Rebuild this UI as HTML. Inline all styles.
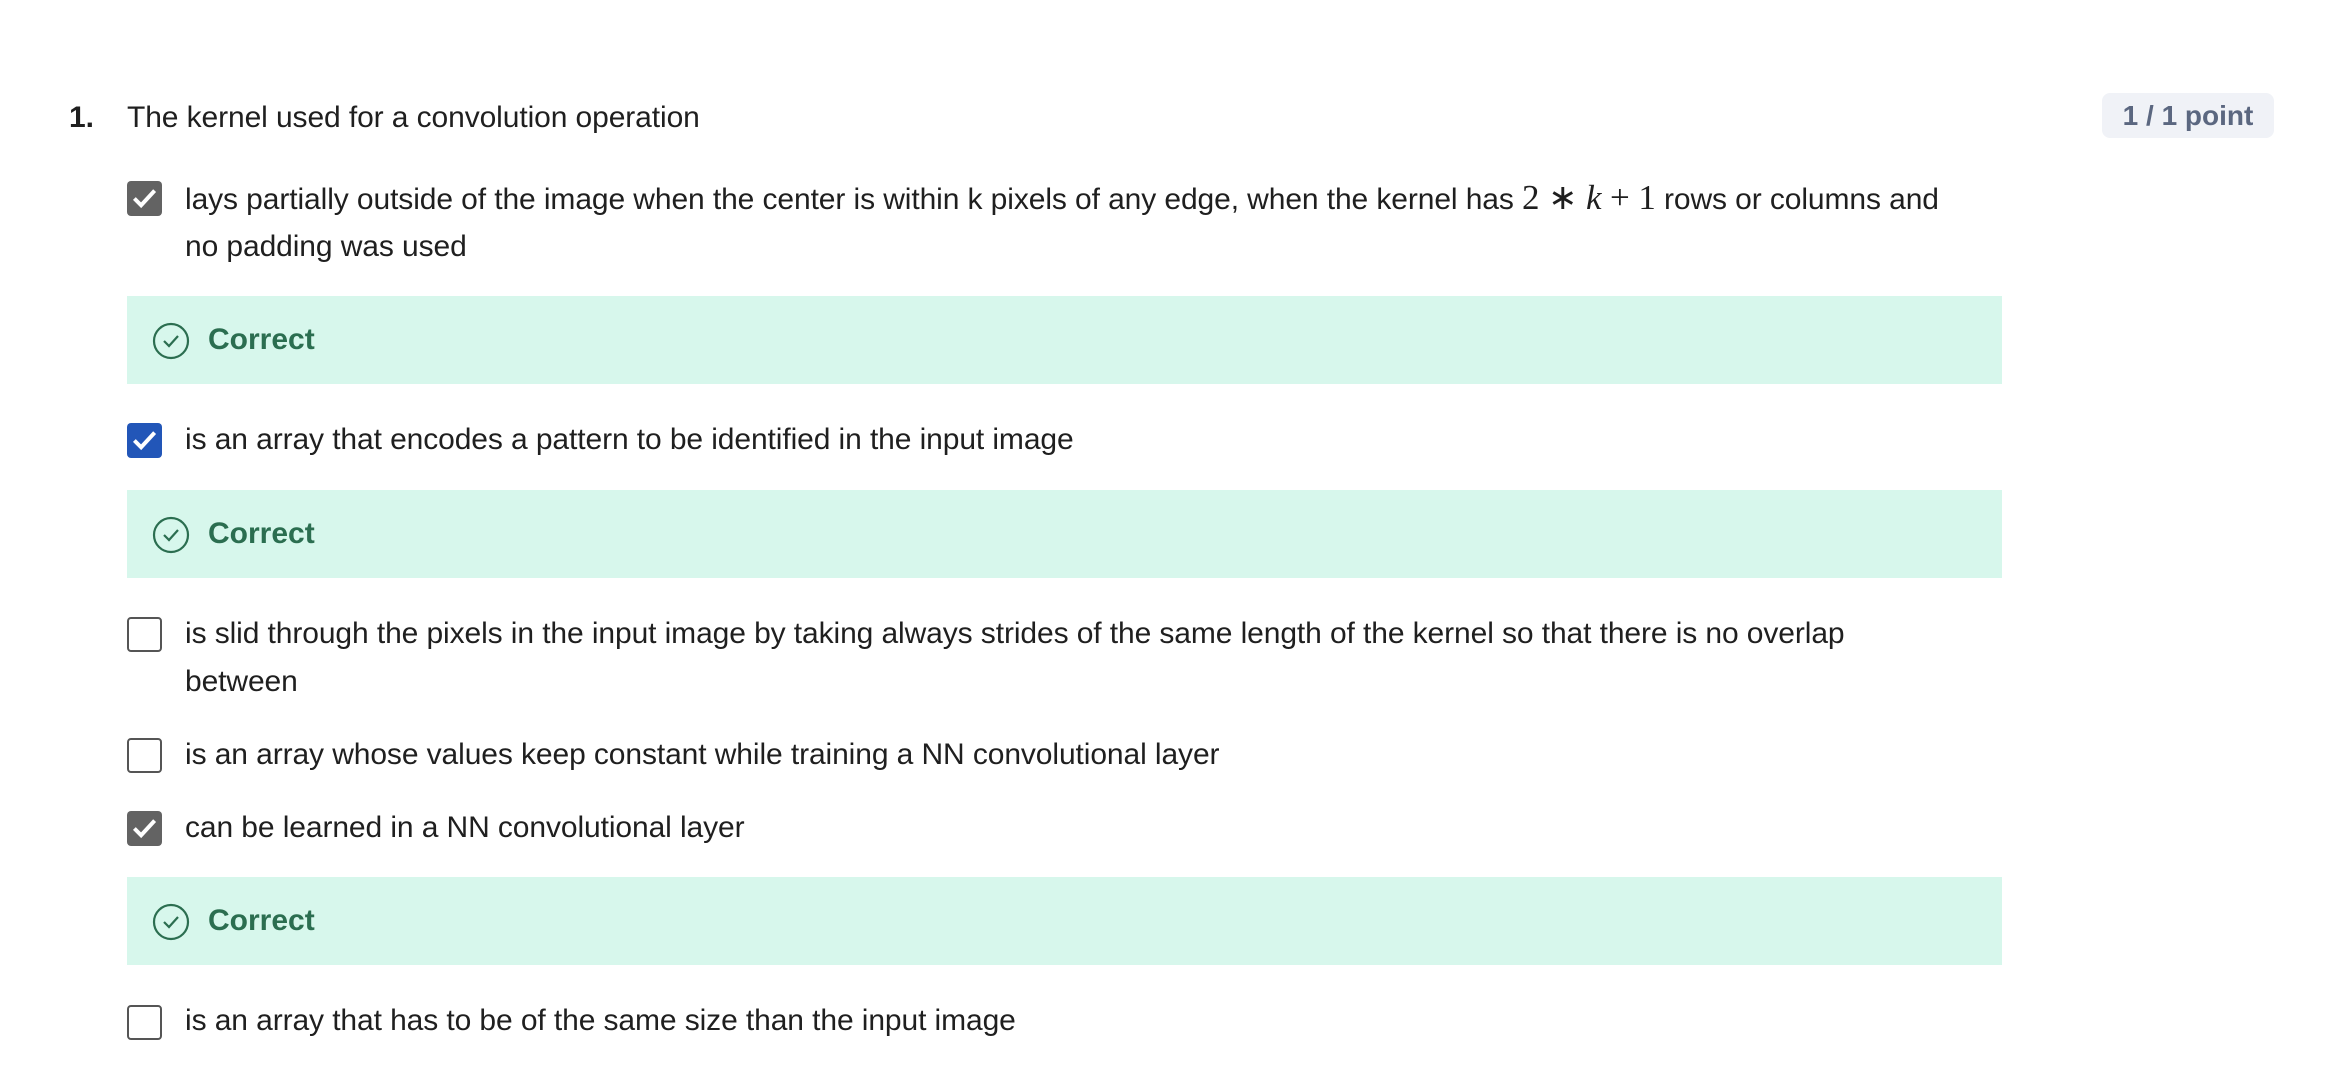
<!DOCTYPE html>
<html><head><meta charset="utf-8"><style>
html,body{margin:0;padding:0;background:#fff;width:2330px;height:1074px;overflow:hidden}
body{font-family:"Liberation Sans",sans-serif;color:#1f1f1f;position:relative}
.a{position:absolute;white-space:nowrap;font-size:30px;letter-spacing:-0.1px}
.cb{position:absolute;left:127px;width:35px;height:35px;border-radius:4px;box-sizing:border-box}
.gray{background:#636363}
.blue{background:#2256b8}
.empty{border:2.5px solid #555;background:#fff}
.cb svg{position:absolute;left:4px;top:5px}
.ok{position:absolute;left:127px;width:1875px;height:88px;background:#d7f7ec}
.ok svg{position:absolute;left:25px;top:26px}
.ok span{position:absolute;left:81px;top:0;line-height:88px;font-size:30px;font-weight:bold;color:#2b6e50}
</style></head><body>
<div class="a" style="left:69px;top:101px;font-weight:bold">1.</div>
<div class="a" style="left:127px;top:101px">The kernel used for a convolution operation</div>
<div style="position:absolute;left:2102px;top:93px;width:172px;height:45px;background:#f0f2f7;border-radius:8px;text-align:center;line-height:45px;font-size:28px;font-weight:bold;color:#5b6780">1 / 1 point</div>

<div class="cb gray" style="top:181px"><svg width="27" height="25" viewBox="0 0 24 22"><path d="M3 11 L9 17 L21 4" fill="none" stroke="#fff" stroke-width="3.5"/></svg></div>
<div class="a" style="left:185px;top:178px">lays partially outside of the image when the center is within k pixels of any edge, when the kernel has <span style="font-family:'Liberation Serif',serif;font-size:35px">2 ∗ <i>k</i> + 1</span> rows or columns and</div>
<div class="a" style="left:185px;top:230px">no padding was used</div>
<div class="ok" style="top:296px"><svg width="38" height="38" viewBox="0 0 38 38"><circle cx="19" cy="19" r="17" fill="none" stroke="#2b6e50" stroke-width="2.2"/><path d="M12 19 L17 24 L26 14" fill="none" stroke="#2b6e50" stroke-width="2.2"/></svg><span>Correct</span></div>

<div class="cb blue" style="top:423px"><svg width="27" height="25" viewBox="0 0 24 22"><path d="M3 11 L9 17 L21 4" fill="none" stroke="#fff" stroke-width="3.5"/></svg></div>
<div class="a" style="left:185px;top:423px">is an array that encodes a pattern to be identified in the input image</div>
<div class="ok" style="top:490px"><svg width="38" height="38" viewBox="0 0 38 38"><circle cx="19" cy="19" r="17" fill="none" stroke="#2b6e50" stroke-width="2.2"/><path d="M12 19 L17 24 L26 14" fill="none" stroke="#2b6e50" stroke-width="2.2"/></svg><span>Correct</span></div>

<div class="cb empty" style="top:617px"></div>
<div class="a" style="left:185px;top:617px">is slid through the pixels in the input image by taking always strides of the same length of the kernel so that there is no overlap</div>
<div class="a" style="left:185px;top:665px">between</div>

<div class="cb empty" style="top:738px"></div>
<div class="a" style="left:185px;top:738px">is an array whose values keep constant while training a NN convolutional layer</div>

<div class="cb gray" style="top:811px"><svg width="27" height="25" viewBox="0 0 24 22"><path d="M3 11 L9 17 L21 4" fill="none" stroke="#fff" stroke-width="3.5"/></svg></div>
<div class="a" style="left:185px;top:811px">can be learned in a NN convolutional layer</div>
<div class="ok" style="top:877px"><svg width="38" height="38" viewBox="0 0 38 38"><circle cx="19" cy="19" r="17" fill="none" stroke="#2b6e50" stroke-width="2.2"/><path d="M12 19 L17 24 L26 14" fill="none" stroke="#2b6e50" stroke-width="2.2"/></svg><span>Correct</span></div>

<div class="cb empty" style="top:1005px"></div>
<div class="a" style="left:185px;top:1004px">is an array that has to be of the same size than the input image</div>
</body></html>
